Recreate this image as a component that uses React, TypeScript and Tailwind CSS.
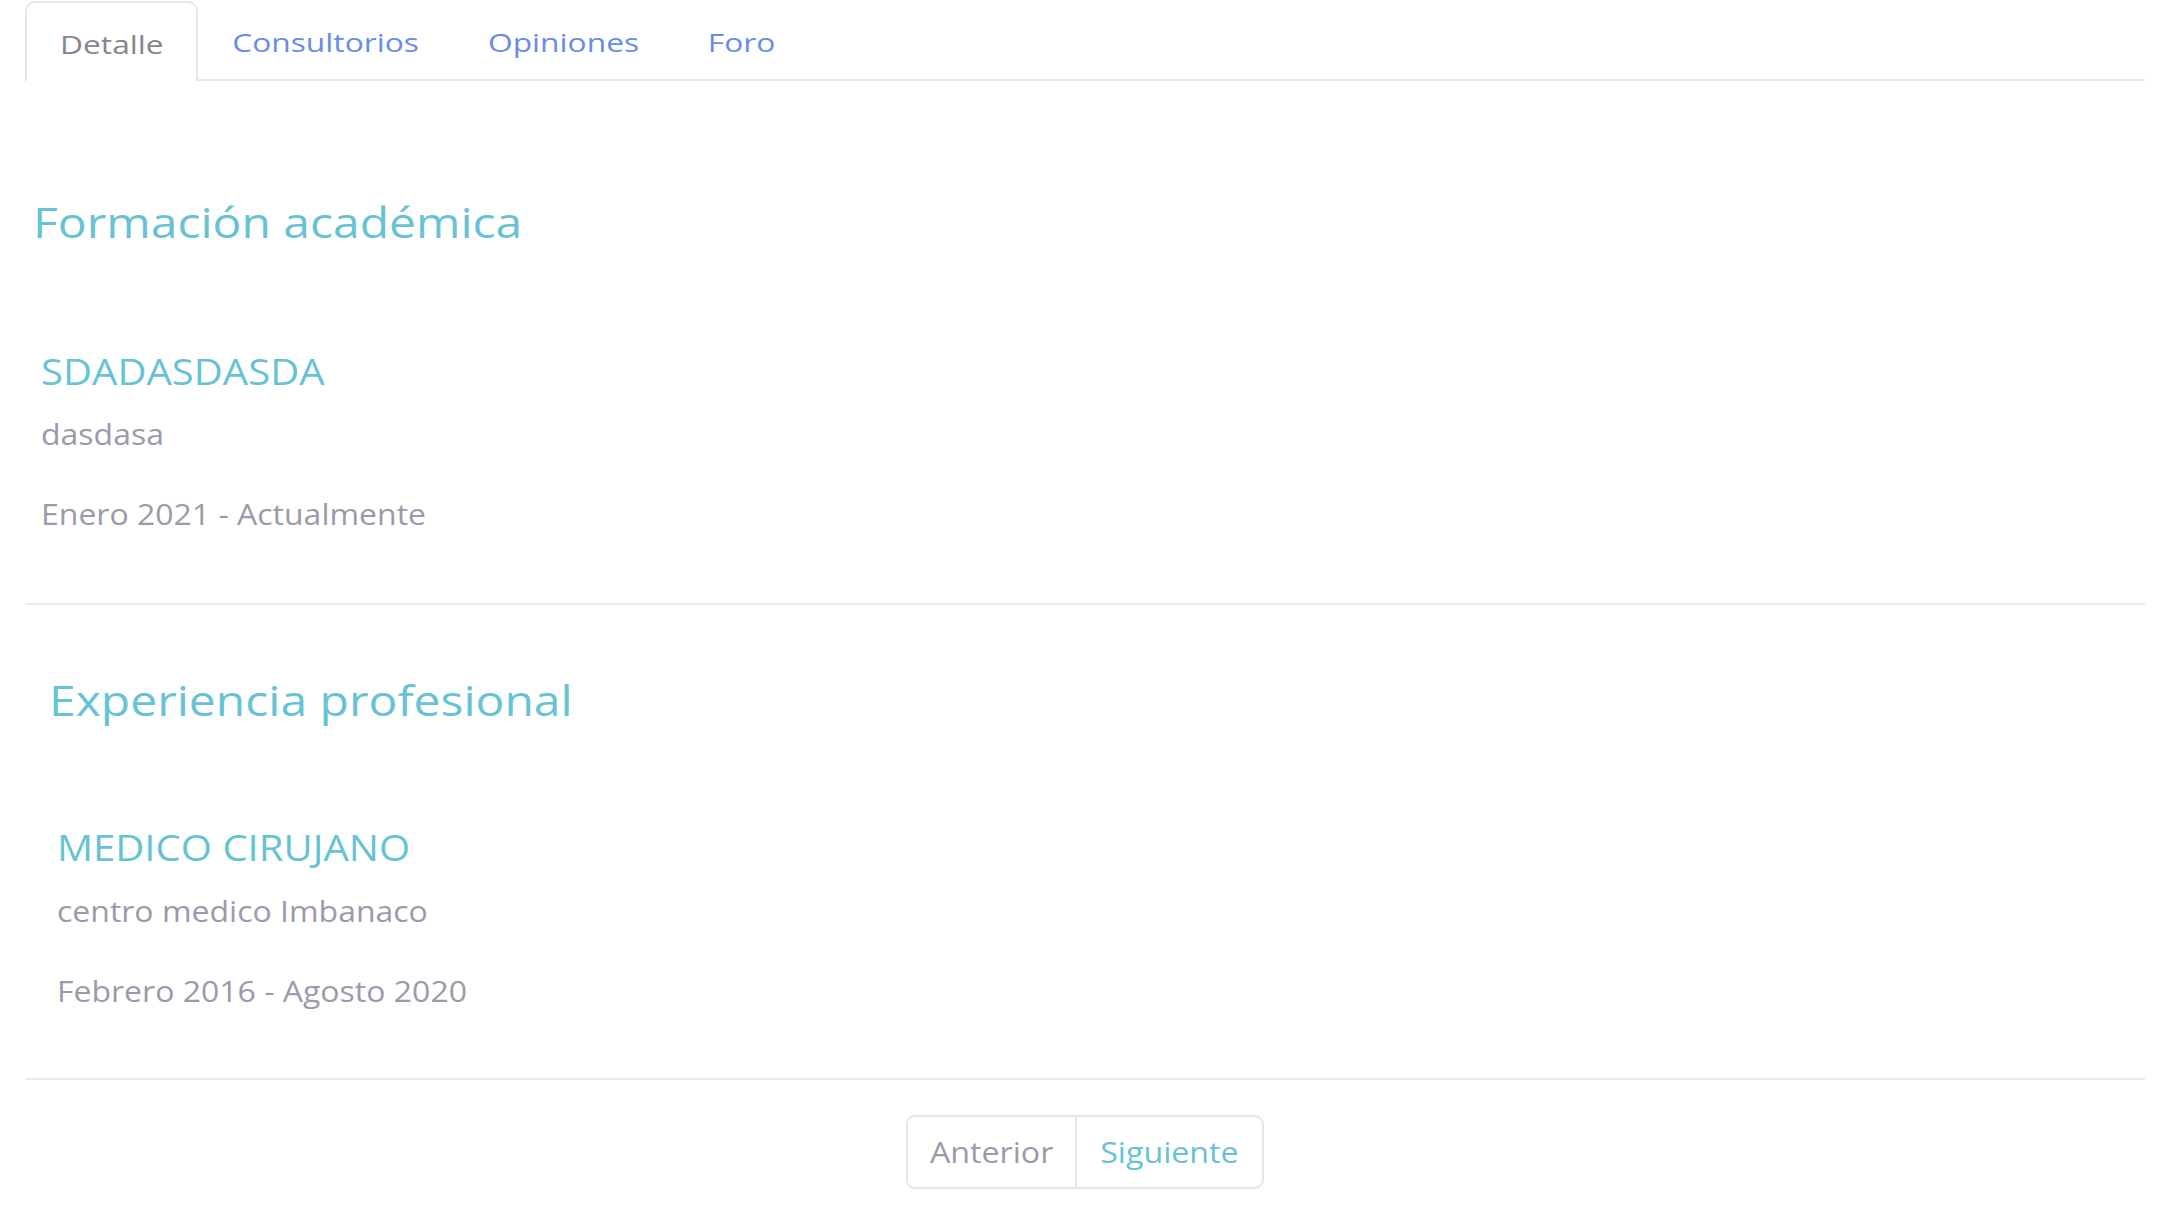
import React from "react";

const teal = "text-[#67c3d3]";

function Tab({ label, active, w }: { label: string; active?: boolean; w: string }) {
  if (active) {
    return (
      <div className={`-mb-[2px] h-[80px] ${w} flex items-center justify-center pt-[5px] border-2 border-b-0 border-[#e3e7ee] rounded-t-[10px] bg-white text-[25px] text-[#86868f]`}>
        <span className="inline-block scale-x-[1.27]">{label}</span>
      </div>
    );
  }
  return (
    <div className={`h-[78px] ${w} flex items-center justify-center pt-[5px] text-[25px] text-[#6a8ce6]`}>
      <span className="inline-block scale-x-[1.27]">{label}</span>
    </div>
  );
}

export default function App() {
  return (
    <div className="min-h-screen bg-white font-['Open_Sans',sans-serif] overflow-hidden">
      <div className="ml-[25px] mr-[22px]">
        <div className="flex items-end border-b-2 border-[#e3e7ee] pt-[1px]">
          <Tab label="Detalle" active w="w-[173px]" />
          <Tab label="Consultorios" w="w-[256px]" />
          <Tab label="Opiniones" w="w-[220px]" />
          <Tab label="Foro" w="w-[136px]" />
        </div>

        <section className="border-b-2 border-[#ebebee] pb-[67px]">
          <div className="mt-[116px] pl-[8px]">
            <h2 className={`w-fit origin-left scale-x-[1.143] text-[42px] leading-[50px] ${teal}`}>Formación académica</h2>
          </div>
          <div className="mt-[103px] pl-[16px]">
            <h3 className={`w-fit origin-left scale-x-[1.113] text-[36px] leading-[43px] ${teal}`}>SDADASDASDA</h3>
          </div>
          <div className="mt-[19px] pl-[16px]">
            <p className="w-fit origin-left scale-x-[1.103] text-[29px] leading-[44px] text-[#9b9aab]">dasdasa</p>
          </div>
          <div className="mt-[36px] pl-[16px]">
            <p className="w-fit origin-left scale-x-[1.103] text-[29px] leading-[44px] text-[#9b9aab]">Enero 2021 - Actualmente</p>
          </div>
        </section>

        <section className="border-b-2 border-[#ebebee] pb-[65px]">
          <div className="mt-[70px] pl-[24px]">
            <h2 className={`w-fit origin-left scale-x-[1.143] text-[42px] leading-[50px] ${teal}`}>Experiencia profesional</h2>
          </div>
          <div className="mt-[101px] pl-[32px]">
            <h3 className={`w-fit origin-left scale-x-[1.113] text-[36px] leading-[43px] ${teal}`}>MEDICO CIRUJANO</h3>
          </div>
          <div className="mt-[20px] pl-[32px]">
            <p className="w-fit origin-left scale-x-[1.103] text-[29px] leading-[44px] text-[#9b9aab]">centro medico Imbanaco</p>
          </div>
          <div className="mt-[36px] pl-[32px]">
            <p className="w-fit origin-left scale-x-[1.103] text-[29px] leading-[44px] text-[#9b9aab]">Febrero 2016 - Agosto 2020</p>
          </div>
        </section>

        <div className="flex justify-center mt-[35px]">
          <div className="flex h-[74px] border-2 border-[#e3e6ee] rounded-[9px] overflow-hidden">
            <button className="w-[169px] flex items-center justify-center text-[29px] text-[#9b9aab] border-r-2 border-[#e3e6ee]">
              <span className="inline-block scale-x-[1.11]">Anterior</span>
            </button>
            <button className={`w-[185px] flex items-center justify-center text-[29px] ${teal}`}>
              <span className="inline-block scale-x-[1.11]">Siguiente</span>
            </button>
          </div>
        </div>
      </div>
    </div>
  );
}
